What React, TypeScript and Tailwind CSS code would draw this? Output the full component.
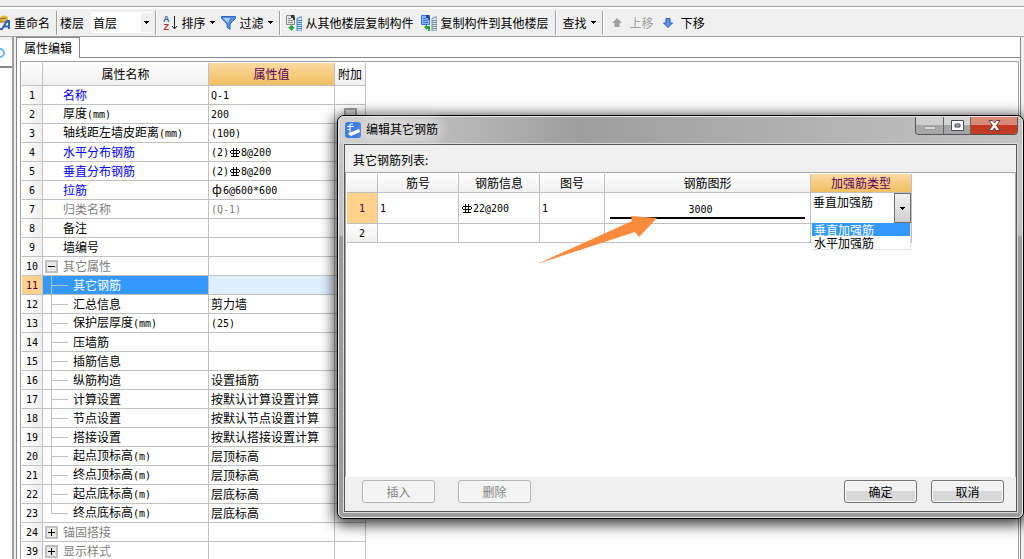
import { useState } from 'react';
import type { ReactNode } from 'react';

type Row = {
  no: number;
  name: string;
  value?: string;
  tone?: 'link' | 'muted';
  kind?: 'group-open' | 'group-closed' | 'child' | 'last-child';
  selected?: boolean;
  check?: boolean;
};

const rows: Row[] = [
  { no: 1, name: '名称', value: 'Q-1', tone: 'link' },
  { no: 2, name: '厚度(mm)', value: '200', check: true },
  { no: 3, name: '轴线距左墙皮距离(mm)', value: '(100)' },
  { no: 4, name: '水平分布钢筋', value: '(2)#8@200', tone: 'link' },
  { no: 5, name: '垂直分布钢筋', value: '(2)#8@200', tone: 'link' },
  { no: 6, name: '拉筋', value: 'ф6@600*600', tone: 'link' },
  { no: 7, name: '归类名称', value: '(Q-1)', tone: 'muted' },
  { no: 8, name: '备注' },
  { no: 9, name: '墙编号' },
  { no: 10, name: '其它属性', tone: 'muted', kind: 'group-open' },
  { no: 11, name: '其它钢筋', kind: 'child', selected: true },
  { no: 12, name: '汇总信息', value: '剪力墙', kind: 'child' },
  { no: 13, name: '保护层厚度(mm)', value: '(25)', kind: 'child' },
  { no: 14, name: '压墙筋', kind: 'child' },
  { no: 15, name: '插筋信息', kind: 'child' },
  { no: 16, name: '纵筋构造', value: '设置插筋', kind: 'child' },
  { no: 17, name: '计算设置', value: '按默认计算设置计算', kind: 'child' },
  { no: 18, name: '节点设置', value: '按默认节点设置计算', kind: 'child' },
  { no: 19, name: '搭接设置', value: '按默认搭接设置计算', kind: 'child' },
  { no: 20, name: '起点顶标高(m)', value: '层顶标高', kind: 'child' },
  { no: 21, name: '终点顶标高(m)', value: '层顶标高', kind: 'child' },
  { no: 22, name: '起点底标高(m)', value: '层底标高', kind: 'child' },
  { no: 23, name: '终点底标高(m)', value: '层底标高', kind: 'last-child' },
  { no: 24, name: '锚固搭接', tone: 'muted', kind: 'group-closed' },
  { no: 39, name: '显示样式', tone: 'muted', kind: 'group-closed' },
];

const barTypes = ['垂直加强筋', '水平加强筋'];

// Grade symbol for ribbed bars
function RebarSymbol() {
  return (
    <svg width="12" height="10" viewBox="0 0 12 10" className="inline-block align-middle" fill="none" stroke="currentColor" shapeRendering="crispEdges">
      <path d="M4.5 0v9M7.5 0v9M2 2.5h8M1.5 3v2M10.5 3v2M2 5.5h8M2 8.5h8" />
    </svg>
  );
}

// Latin runs are set half as wide as the Chinese characters, # is the bar symbol
function Mixed({ text }: { text: string }) {
  const parts = text.split(/([\x20-\x7e]+)/).filter(Boolean);
  return (
    <>
      {parts.map((part, i) =>
        /^[\x20-\x7e]/.test(part) ? (
          <span key={i} className="font-['DejaVu_Sans_Mono',monospace] text-[10px]">
            {part.split('#').map((run, j) => (
              <span key={j}>
                {j > 0 && <RebarSymbol />}
                {run}
              </span>
            ))}
          </span>
        ) : (
          <span key={i} className={part === 'ф' ? 'inline-block w-[12px] text-center' : undefined}>
            {part}
          </span>
        ),
      )}
    </>
  );
}

function Caret() {
  return (
    <svg width="5" height="3" viewBox="0 0 5 3" className="shrink-0" shapeRendering="crispEdges">
      <path d="M0 0h5v1h-1v1h-1v1h-1v-1h-1v-1h-1z" fill="currentColor" />
    </svg>
  );
}

function CopyIcon({ back }: { back?: boolean }) {
  const page = back ? '#3f74d8' : '#8b8b8b';
  const tower = back ? '#7f8c99' : '#3f86d0';
  return (
    <svg width="16" height="16" viewBox="0 0 16 16" fill="none">
      <path d="M.5 .5h8v9h-8z" fill={back ? '#8db4f5' : '#e6e6e6'} stroke={page} />
      <path d="M5 0h3v2h1v3H7V3H5z" fill={back ? '#1c48a8' : '#333'} />
      <path d="M2 3.500h3M2 5.500h5M2 7.500h5" stroke={page} />
      <path d="M11 3.500l3-1.500h2v14h-5z" fill="#d6e7f7" stroke={tower} />
      <path d="M11 5.500h5M11 7.500h5M11 9.500h5M11 11.500h5M11 13.500h5" stroke={tower} />
      {back ? (
        <path d="M3 12l3-3v2h3v5H7v-2H6v1z" fill="#22a63c" />
      ) : (
        <path d="M2 12h2v-1.500h3V12h2l-3.500 4z" fill="#22a63c" />
      )}
    </svg>
  );
}

function ToolButton({ icon, label, caret, disabled }: { icon?: ReactNode; label: string; caret?: boolean; disabled?: boolean }) {
  return (
    <button
      type="button"
      disabled={disabled}
      className="flex h-6 shrink-0 items-center gap-1 whitespace-nowrap disabled:text-[#a0a0a0]"
    >
      {icon}
      <span>{label}</span>
      {caret && <Caret />}
    </button>
  );
}

function Separator() {
  return <div className="h-6 w-[2px] shrink-0 border-l border-r border-l-[#a0a0a0] border-r-white" />;
}

function Toolbar() {
  return (
    <div className="flex h-[28px] shrink-0 items-center overflow-hidden border-b border-[#a0a0a0] bg-[#f0f0f0]">
      <ToolButton
        label="重命名"
        icon={
          <svg width="10" height="16" viewBox="0 0 10 16" fill="none">
            <path d="M0 2c3-2 7-2 8 1v4H0z" fill="#e5b84a" />
            <path d="M0 4l6-1M0 7h8" stroke="#8a6a20" />
            <path d="M0 14h2l5-8h2v8M3.500 11.500H8" stroke="#2f66b8" strokeWidth="2" />
          </svg>
        }
      />
      <div className="ml-[6px]">
        <Separator />
      </div>
      <label htmlFor="floor" className="ml-[2px] shrink-0">
        楼层
      </label>
      <div className="relative ml-[7px] flex h-[21px] w-[60px] shrink-0 items-center bg-white">
        <select id="floor" className="h-full w-full appearance-none bg-transparent pl-[2px] outline-none">
          <option>首层</option>
        </select>
        <span className="pointer-events-none absolute right-0 flex h-[19px] w-[10px] items-center justify-center bg-[#f0f0f0]">
          <Caret />
        </span>
      </div>
      <div className="ml-[4px] flex items-center gap-[6px]">
        <Separator />
        <ToolButton
          label="排序"
          caret
          icon={
            <span className="flex items-center">
              <span className="flex flex-col font-['Liberation_Sans',sans-serif] text-[9px] font-bold leading-[8px]">
                <span className="text-[#2f5fa8]">A</span>
                <span className="text-[#a83030]">Z</span>
              </span>
              <svg width="8" height="14" viewBox="0 0 8 14" fill="none" stroke="#222">
                <path d="M4.500 0v13M2 10l2.500 3L7 10" />
              </svg>
            </span>
          }
        />
        <ToolButton
          label="过滤"
          caret
          icon={
            <svg width="15" height="14" viewBox="0 0 15 14">
              <path d="M.5.500h14v2L9 8v5.500L6 11V8L.5 2.500z" fill="#4f8fe8" stroke="#2c66c0" />
              <path d="M2 2h7L7 7z" fill="#a9cdfa" />
            </svg>
          }
        />
        <Separator />
      </div>
      <div className="ml-[5px] flex items-center gap-[7px]">
        <ToolButton label="从其他楼层复制构件" icon={<CopyIcon />} />
        <ToolButton label="复制构件到其他楼层" icon={<CopyIcon back />} />
      </div>
      <div className="ml-[6px] flex items-center gap-[6px]">
        <Separator />
        <ToolButton label="查找" caret />
        <Separator />
      </div>
      <div className="ml-[8px] flex items-center gap-[9px]">
        <ToolButton
          label="上移"
          disabled
          icon={
            <svg width="14" height="10" viewBox="0 0 14 10">
              <path d="M5 0l5 5H7.500v4h-5V5H0z" fill="#a0a0a0" />
            </svg>
          }
        />
        <ToolButton
          label="下移"
          icon={
            <svg width="14" height="10" viewBox="0 0 14 10">
              <path d="M3 .5h4V5h2.500L5 9.500.5 5H3z" fill="#5f95ee" stroke="#2b57b5" />
            </svg>
          }
        />
      </div>
    </div>
  );
}

function TreeBranch({ kind }: { kind: Row['kind'] }) {
  if (kind === 'group-open' || kind === 'group-closed') {
    return (
      <button
        type="button"
        aria-label={kind === 'group-open' ? '收起' : '展开'}
        className="mx-[2px] flex h-[13px] w-[13px] shrink-0 items-center justify-center border-2 border-[#c0c0c0] bg-[#e8e8e8]"
      >
        <svg width="9" height="9" viewBox="0 0 9 9" stroke="#000" shapeRendering="crispEdges">
          <path d={kind === 'group-open' ? 'M1 4.500h7' : 'M1 4.500h7M4.500 1v7'} />
        </svg>
      </button>
    );
  }
  if (kind === 'child') {
    return (
      <span className="ml-[8px] flex h-full w-[17px] shrink-0 items-center border-l border-[#c0c0c0]">
        <span className="h-px w-full bg-[#c0c0c0]" />
      </span>
    );
  }
  return (
    <span className="ml-[8px] flex h-full w-[17px] shrink-0 items-start">
      <span className="h-[10px] w-full border-b border-l border-[#c0c0c0]" />
    </span>
  );
}

function PropertyRow({ row }: { row: Row }) {
  const tone = row.tone === 'link' ? 'text-[#0000ff]' : row.tone === 'muted' ? 'text-[#808080]' : 'text-black';
  const isChild = row.kind === 'child' || row.kind === 'last-child';

  return (
    <tr className="h-[19px]">
      <th
        scope="row"
        className={
          row.selected
            ? 'border-b border-r border-[#c0c0c0] bg-[#ffd28c] font-normal text-[#4b0050]'
            : 'border-b border-r border-[#c0c0c0] bg-gradient-to-r from-white to-[#f0f0f0] font-normal'
        }
      >
        <Mixed text={String(row.no)} />
      </th>
      <td className={`border-b border-r border-[#c0c0c0] ${row.selected ? 'bg-[#3399ff] text-white' : tone}`}>
        <div className="flex h-[18px] items-center">
          {row.kind && <TreeBranch kind={row.kind} />}
          <span className={isChild ? 'pl-[5px]' : row.kind ? 'pl-[3px]' : 'pl-[20px]'}>
            <Mixed text={row.name} />
          </span>
        </div>
      </td>
      <td
        className={`border-b border-r border-[#c0c0c0] pl-[2px] ${row.selected ? 'bg-[#e0efff]' : ''} ${row.tone === 'muted' ? 'text-[#808080]' : ''}`}
      >
        {row.value && <Mixed text={row.value} />}
      </td>
      <td className="border-b border-r border-[#c0c0c0]">
        {row.check && (
          <input
            type="checkbox"
            aria-label="附加"
            className="mx-auto block h-[13px] w-[13px] appearance-none border-2 border-[#a0a0a0] bg-[#dcdcdc]"
          />
        )}
      </td>
    </tr>
  );
}

function PropertyTable() {
  return (
    <table className="w-[344px] table-fixed border-separate border-spacing-0 leading-[14px]">
      <colgroup>
        <col className="w-[21px]" />
        <col className="w-[166px]" />
        <col className="w-[126px]" />
        <col className="w-[31px]" />
      </colgroup>
      <thead>
        <tr className="h-[23px] bg-gradient-to-b from-white to-[#f0f0f0]">
          <th className="border-b border-r border-[#c0c0c0]" aria-label="序号" />
          <th className="border-b border-r border-[#c0c0c0] font-normal">属性名称</th>
          <th className="border-b border-r border-[#c0c0c0] bg-gradient-to-b from-[#fbd9a0] to-[#f2bf60] font-normal text-[#5a0060]">
            属性值
          </th>
          <th className="border-b border-r border-[#c0c0c0] font-normal">附加</th>
        </tr>
      </thead>
      <tbody>
        {rows.map((row) => (
          <PropertyRow key={row.no} row={row} />
        ))}
      </tbody>
    </table>
  );
}

function BarTable() {
  const [type, setType] = useState(barTypes[0]);
  const head = 'border-b border-r border-[#c0c0c0] font-normal';
  const cell = 'border-b border-r border-[#c0c0c0] pl-[2px]';

  return (
    <table className="w-[565px] table-fixed border-separate border-spacing-0 leading-[14px]">
      <colgroup>
        <col className="w-[31px]" />
        <col className="w-[81px]" />
        <col className="w-[81px]" />
        <col className="w-[65px]" />
        <col className="w-[206px]" />
        <col className="w-[101px]" />
      </colgroup>
      <thead>
        <tr className="h-[19px] bg-gradient-to-b from-white to-[#f0f0f0]">
          <th className={head} aria-label="序号" />
          <th className={head}>筋号</th>
          <th className={head}>钢筋信息</th>
          <th className={head}>图号</th>
          <th className={head}>钢筋图形</th>
          <th className={`${head} bg-gradient-to-b from-[#fbd9a0] to-[#f2bf60] text-[#5a0060]`}>加强筋类型</th>
        </tr>
      </thead>
      <tbody>
        <tr className="h-[31px]">
          <th scope="row" className={`${head} bg-[#ffd28c] text-[#4b0050]`}>
            <Mixed text="1" />
          </th>
          <td className={cell}>
            <Mixed text="1" />
          </td>
          <td className={cell}>
            <Mixed text="#22@200" />
          </td>
          <td className={cell}>
            <Mixed text="1" />
          </td>
          <td className="border-b border-r border-[#c0c0c0] px-[5px] pt-[8px] align-top">
            {/* Straight bar with its length */}
            <div className="border-b-2 border-black pr-[14px] text-center">
              <Mixed text="3000" />
            </div>
          </td>
          <td className="relative border-b border-r border-[#c0c0c0] p-0">
            <div className="flex h-[30px]">
              <select
                aria-label="加强筋类型"
                value={type}
                onChange={(e) => setType(e.target.value)}
                className="h-full min-w-0 flex-1 appearance-none bg-white pb-[13px] pl-[2px] leading-[16px] outline-none"
              >
                {barTypes.map((t) => (
                  <option key={t}>{t}</option>
                ))}
              </select>
              <span className="pointer-events-none flex w-[17px] items-center justify-center border border-[#707070] bg-gradient-to-b from-[#f2f2f2] to-[#cfcfcf]">
                <Caret />
              </span>
            </div>
            <ul role="listbox" aria-label="加强筋类型" className="absolute left-px top-[30px] z-10 w-[99px] border-b border-r border-[#e4e4ec] bg-white leading-[13px]">
              {barTypes.map((t) => (
                <li
                  key={t}
                  role="option"
                  aria-selected={t === type}
                  onClick={() => setType(t)}
                  className="h-[13px] pl-[2px] aria-selected:bg-[#3399ff] aria-selected:text-white"
                >
                  {t}
                </li>
              ))}
            </ul>
          </td>
        </tr>
        <tr className="h-[19px]">
          <th scope="row" className={`${head} bg-gradient-to-b from-white to-[#f0f0f0]`}>
            <Mixed text="2" />
          </th>
          <td className={cell} />
          <td className={cell} />
          <td className={cell} />
          <td className={cell} />
          <td className={cell} />
        </tr>
      </tbody>
    </table>
  );
}

function DialogButton({ label, disabled }: { label: string; disabled?: boolean }) {
  return (
    <button
      type="button"
      disabled={disabled}
      className="h-[23px] w-[73px] rounded-[3px] border border-[#707070] bg-gradient-to-b from-[#f2f2f2] from-50% to-[#d9d9d9] to-50% shadow-[inset_0_0_0_1px_#fbfbfb] disabled:border-[#adb2b5] disabled:from-[#f4f4f4] disabled:to-[#f4f4f4] disabled:text-[#838383]"
    >
      {label}
    </button>
  );
}

function RebarDialog() {
  return (
    <div
      role="dialog"
      aria-labelledby="dialog-title"
      className="absolute left-[337px] right-0 top-[115px] rounded-[7px] border border-black bg-[#a0a0a0] shadow-[0_3px_14px_3px_rgba(0,0,0,0.75)]"
    >
      <div className="rounded-[6px] border border-[#e8e8e8] bg-gradient-to-b from-[#c8c8c8] from-0% via-[#c0c0c0] via-[118px] to-[#9c9c9c] to-[120px] px-[4px] pb-[4px]">
        <div className="-mx-[4px] flex h-[26px] items-start rounded-t-[5px] bg-gradient-to-r from-[#d2d2d2] via-[#9e9e9e] via-35% to-[#c4c4c4] pl-[6px] pr-[4px]">
          <svg width="16" height="16" viewBox="0 0 16 16" className="mt-[5px] shrink-0" fill="none">
            <rect width="16" height="16" rx="3" fill="#3b7ee0" />
            <path d="M2 4.500h7M5.500 7.500h-3M5 2v9M8 2H5" stroke="#fff" />
            <path d="M4 11l10-4 1 3-9 4-3-2z" fill="#fff" />
          </svg>
          <h2
            id="dialog-title"
            className="ml-[5px] mt-[4px] rounded-full bg-white/30 leading-[16px] shadow-[0_0_8px_5px_rgba(255,255,255,0.3)]"
          >
            编辑其它钢筋
          </h2>
          <div className="ml-auto flex h-[18px] overflow-hidden rounded-b-[4px] border border-t-0 border-[#555]">
            <button type="button" aria-label="最小化" className="flex w-[28px] items-center justify-center border-r border-[#666] bg-gradient-to-b from-[#cfcfcf] from-50% to-[#a8a8a8] to-50%">
              <svg width="12" height="12" viewBox="0 0 12 12">
                <rect x=".5" y="6.500" width="11" height="3" fill="#d8d8d8" stroke="#999" />
              </svg>
            </button>
            <button type="button" aria-label="最大化" className="flex w-[27px] items-center justify-center border-r border-[#666] bg-gradient-to-b from-[#d4d4d4] from-50% to-[#a4a4a4] to-50%">
              <svg width="13" height="11" viewBox="0 0 13 11" stroke="#4a4d60">
                <path fillRule="evenodd" d="M.5.500h12v10H.5zM4 4v3h5V4z" fill="#fff" />
              </svg>
            </button>
            <button type="button" aria-label="关闭" className="flex w-[46px] items-center justify-center bg-gradient-to-b from-[#dc8a78] from-50% to-[#c23a22] to-50%">
              <svg width="13" height="11" viewBox="0 0 13 11">
                <path d="M1 .5h3.500l2 2.500 2-2.500H12L8.500 5.500l3.500 5H8.500l-2-2.500-2 2.500H1l3.500-5z" fill="#fff" stroke="#5a4048" />
              </svg>
            </button>
          </div>
        </div>

        <div className="border border-[#dcdcdc]">
          <div className="border border-[#555] bg-[#f0f0f0]">
            <p className="flex h-[27px] items-center pl-[8px] pt-[3px]">其它钢筋列表:</p>
            <div className="h-[305px] border-l border-r border-t border-[#a8a8a8] bg-white pl-px pt-px">
              <BarTable />
            </div>
            <div className="flex h-[34px] items-start gap-[23px] pl-[17px] pr-[12px] pt-[3px]">
              <DialogButton label="插入" disabled />
              <DialogButton label="删除" disabled />
              <div className="ml-auto flex gap-[14px]">
                <DialogButton label="确定" />
                <DialogButton label="取消" />
              </div>
            </div>
          </div>
        </div>
      </div>
    </div>
  );
}

export default function App() {
  return (
    <div className="relative flex h-screen flex-col overflow-hidden bg-[#f0f0f0] font-['Noto_Sans_CJK_SC',sans-serif] text-[12px] leading-[16px] text-black">
      <div className="h-[7px] shrink-0 border-b border-[#a0a0a0]" />
      <div className="h-[2px] shrink-0 bg-white" />
      <Toolbar />

      <div className="flex min-h-0 flex-1">
        {/* Edge of the docked panel on the left */}
        <div className="flex w-[14px] shrink-0 flex-col border-r-2 border-[#a0a0a0] pt-[3px]">
          <div className="flex h-[28px] shrink-0 items-center border-b-2 border-[#828790] bg-white">
            <svg width="6" height="12" viewBox="0 0 6 12" fill="none">
              <circle cx="0" cy="6" r="4" stroke="#6cb6ee" strokeWidth="2" />
            </svg>
          </div>
          <div className="flex-1 bg-white" />
        </div>

        <main className="ml-[2px] mr-[3px] flex min-w-0 flex-1 flex-col">
          <div role="tablist" className="flex h-[21px] shrink-0 bg-white">
            <button
              type="button"
              role="tab"
              aria-selected="true"
              className="w-[64px] border-l border-r border-t border-[#828790] bg-white"
            >
              属性编辑
            </button>
            <div className="flex-1 border-b border-r border-[#828790]" />
          </div>
          <div className="min-h-0 flex-1 border-l border-r border-[#828790] bg-white pl-[3px] pr-px pt-[3px]">
            <div className="h-full overflow-hidden border-l border-r border-t border-[#a0a0a0] pl-px pt-px">
              <PropertyTable />
            </div>
          </div>
        </main>
      </div>

      <RebarDialog />

      {/* Pointer to the bar drawing */}
      <svg width="120" height="50" viewBox="0 0 120 50" className="pointer-events-none absolute left-[537px] top-[215px] z-20">
        <path d="M0 49L95 6l-1-5 26 2-18 19-4-5z" fill="#fb8b3c" />
      </svg>
    </div>
  );
}
